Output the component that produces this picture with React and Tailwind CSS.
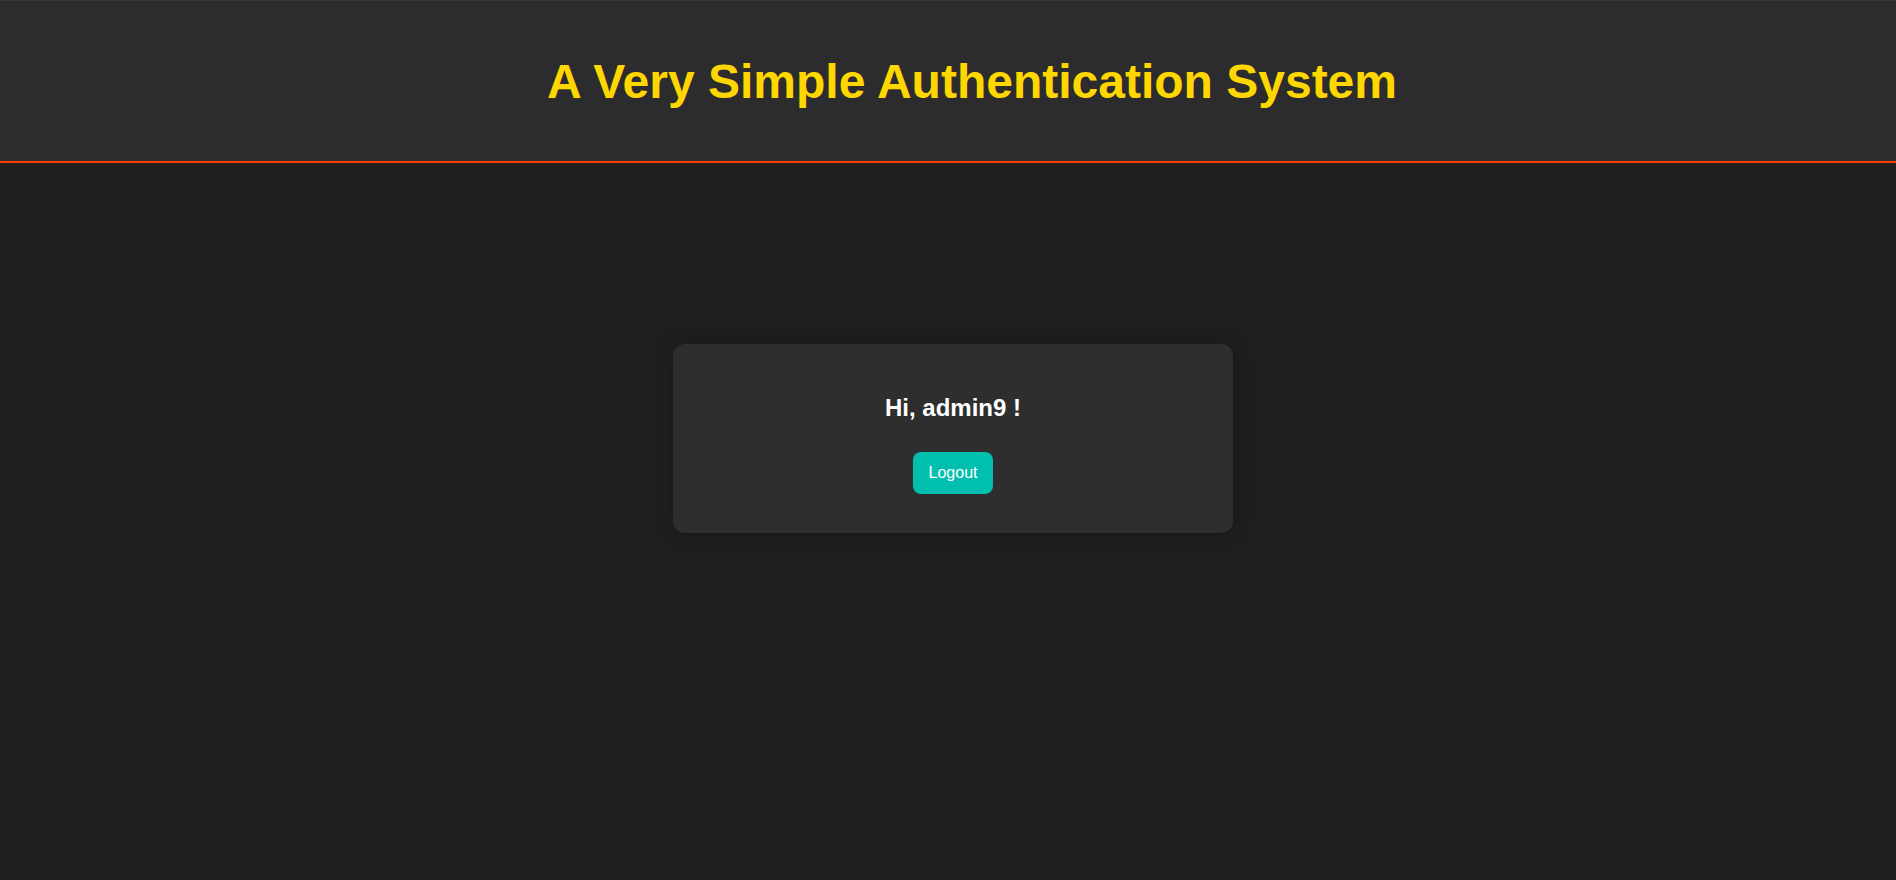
export default function App() {
  return (
    <div
      className="min-h-screen bg-[#1f1f1f] flex flex-col"
      style={{ fontFamily: '"Liberation Sans", Arial, sans-serif' }}
    >
      <header className="h-[163px] bg-[#2c2c2e] border-t border-t-[#3a3a3c] border-b-2 border-b-[#ff3d00] flex items-center justify-center pl-[48px] pt-[2px]">
        <h1 className="text-[48px] leading-[56px] font-bold text-[#ffd700]">
          A Very Simple Authentication System
        </h1>
      </header>
      <main className="flex justify-center pl-[10px] pt-[181px]">
        <div className="w-[560px] h-[189px] bg-[#2e2e2e] rounded-xl shadow-[0_0_20px_rgba(0,0,0,0.25)] flex flex-col items-center pt-[50px]">
          <h2 className="text-[24px] leading-[28px] font-bold text-white">
            Hi, admin9 !
          </h2>
          <button className="mt-[30px] px-4 py-3 text-[16px] leading-[18px] text-white bg-[#00bfae] rounded-lg">
            Logout
          </button>
        </div>
      </main>
    </div>
  );
}
